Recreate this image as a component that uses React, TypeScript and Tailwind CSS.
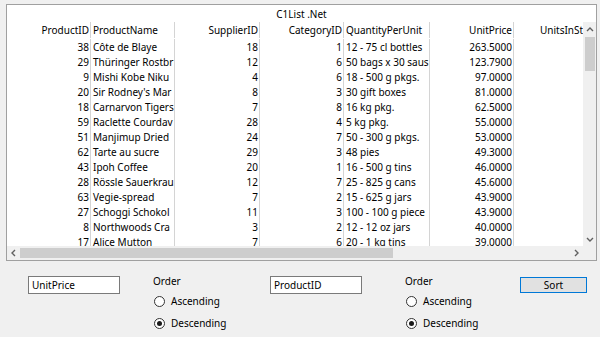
import React from "react";

const rows: [string, string, string, string, string, string][] = [
  ["38", "Côte de Blaye", "18", "1", "12 - 75 cl bottles", "263.5000"],
  ["29", "Thüringer Rostbr", "12", "6", "50 bags x 30 saus", "123.7900"],
  ["9", "Mishi Kobe Niku", "4", "6", "18 - 500 g pkgs.", "97.0000"],
  ["20", "Sir Rodney's Mar", "8", "3", "30 gift boxes", "81.0000"],
  ["18", "Carnarvon Tigers", "7", "8", "16 kg pkg.", "62.5000"],
  ["59", "Raclette Courdav", "28", "4", "5 kg pkg.", "55.0000"],
  ["51", "Manjimup Dried", "24", "7", "50 - 300 g pkgs.", "53.0000"],
  ["62", "Tarte au sucre", "29", "3", "48 pies", "49.3000"],
  ["43", "Ipoh Coffee", "20", "1", "16 - 500 g tins", "46.0000"],
  ["28", "Rössle Sauerkrau", "12", "7", "25 - 825 g cans", "45.6000"],
  ["63", "Vegie-spread", "7", "2", "15 - 625 g jars", "43.9000"],
  ["27", "Schoggi Schokol", "11", "3", "100 - 100 g piece", "43.9000"],
  ["8", "Northwoods Cra", "3", "2", "12 - 12 oz jars", "40.0000"],
  ["17", "Alice Mutton", "7", "6", "20 - 1 kg tins", "39.0000"],
];

function Row({ cells, header }: { cells: string[]; header?: boolean }) {
  return (
    <div className={header ? "flex h-[17px] items-end pb-[1px] shrink-0" : "flex h-[15px] items-center shrink-0"}>
      <div className="w-[84px] shrink-0 h-full border-r border-[#d4d4d4] text-right pr-[1px] overflow-hidden whitespace-nowrap flex items-center justify-end">{cells[0]}</div>
      <div className="w-[84px] shrink-0 h-full border-r border-[#d4d4d4] text-left pl-[2px] overflow-hidden whitespace-nowrap flex items-center">{cells[1]}</div>
      <div className="w-[85px] shrink-0 h-full border-r border-[#d4d4d4] text-right pr-[1px] overflow-hidden whitespace-nowrap flex items-center justify-end">{cells[2]}</div>
      <div className="w-[84px] shrink-0 h-full border-r border-[#d4d4d4] text-right pr-[1px] overflow-hidden whitespace-nowrap flex items-center justify-end">{cells[3]}</div>
      <div className="w-[86px] shrink-0 h-full border-r border-[#d4d4d4] text-left pl-[2px] overflow-hidden whitespace-nowrap flex items-center">{cells[4]}</div>
      <div className="w-[84px] shrink-0 h-full border-r border-[#d4d4d4] text-right pr-[1px] overflow-hidden whitespace-nowrap flex items-center justify-end">{cells[5]}</div>
      <div className="w-[100px] shrink-0 h-full text-left pl-[26px] overflow-hidden whitespace-nowrap flex items-center">{cells[6] ?? ""}</div>
    </div>
  );
}

function Radio({ checked, label }: { checked?: boolean; label: string }) {
  return (
    <div className="flex items-center h-[14px]">
      <div className="w-[11px] h-[11px] rounded-full border border-[#333333] bg-white flex items-center justify-center ml-[1px]">
        {checked && <div className="w-[5px] h-[5px] rounded-full bg-[#1a1a1a]" />}
      </div>
      <span className="ml-[6px]">{label}</span>
    </div>
  );
}

function OrderGroup({ width, mlClass }: { width: string; mlClass: string }) {
  return (
    <div className={`${width} ${mlClass} flex flex-col`}>
      <div className="h-[12px] mt-[-1px] flex items-center">Order</div>
      <div className="mt-[7px]">
        <Radio label="Ascending" />
      </div>
      <div className="mt-[8px]">
        <Radio label="Descending" checked />
      </div>
    </div>
  );
}

const Chevron = ({ dir }: { dir: "up" | "down" | "left" | "right" }) => {
  const d =
    dir === "up"
      ? "M1 5 L4 2 L7 5"
      : dir === "down"
      ? "M1 2 L4 5 L7 2"
      : dir === "left"
      ? "M5 1 L2 4 L5 7"
      : "M2 1 L5 4 L2 7";
  const w = dir === "up" || dir === "down" ? 8 : 7;
  const h = dir === "up" || dir === "down" ? 7 : 8;
  return (
    <svg width={w} height={h} viewBox={`0 0 ${w} ${h}`}>
      <path d={d} fill="none" stroke="#606060" strokeWidth="1.4" />
    </svg>
  );
};

export default function App() {
  return (
    <div
      className="w-[600px] h-[337px] bg-[#f0f0f0] overflow-hidden text-[10px] leading-[12px] text-black"
      style={{ fontFamily: '"Noto Sans", "Open Sans", sans-serif' }}
    >
      <div className="mt-[4px] ml-[6px] w-[591px] h-[257px] border border-[#a0a0a0] bg-white flex flex-col">
        <div className="h-[17px] shrink-0 flex items-center justify-center pt-[1px]">C1List .Net</div>
        <div className="flex-1 flex min-h-0">
          <div className="flex-1 min-w-0 overflow-hidden flex flex-col">
            <Row header cells={["ProductID", "ProductName", "SupplierID", "CategoryID", "QuantityPerUnit", "UnitPrice", "UnitsInStock"]} />
            {rows.map((r, i) => (
              <Row key={i} cells={r} />
            ))}
          </div>
          <div className="w-[13px] shrink-0 bg-[#f0f0f0] flex flex-col items-center">
            <div className="h-[14px] flex items-center justify-center">
              <Chevron dir="up" />
            </div>
            <div className="flex-1 w-full flex flex-col items-center">
              <div className="w-[10px] h-[34px] bg-[#cdcdcd] mt-[1px]" />
            </div>
            <div className="h-[14px] flex items-center justify-center">
              <Chevron dir="down" />
            </div>
          </div>
        </div>
        <div className="h-[14px] shrink-0 flex">
          <div className="flex-1 bg-[#f0f0f0] flex items-center">
            <div className="w-[13px] flex items-center justify-center">
              <Chevron dir="left" />
            </div>
            <div className="flex-1 h-full flex items-center">
              <div className="w-[373px] h-[10px] bg-[#cdcdcd]" />
            </div>
            <div className="w-[13px] flex items-center justify-center">
              <Chevron dir="right" />
            </div>
          </div>
          <div className="w-[13px] bg-[#f0f0f0]" />
        </div>
      </div>

      <div className="flex items-start mt-[15px]">
        <div className="ml-[28px] w-[92px] h-[18px] border border-[#7a7a7a] bg-white flex items-center pl-[3px]">UnitPrice</div>
        <OrderGroup width="w-[117px]" mlClass="ml-[33px]" />
        <div className="w-[92px] h-[18px] border border-[#7a7a7a] bg-white flex items-center pl-[3px]">ProductID</div>
        <OrderGroup width="w-[115px]" mlClass="ml-[43px]" />
        <div className="w-[67px] h-[16px] mt-[1px] border border-[#0078d7] bg-[#e1e1e1] flex items-center justify-center">Sort</div>
      </div>
    </div>
  );
}
